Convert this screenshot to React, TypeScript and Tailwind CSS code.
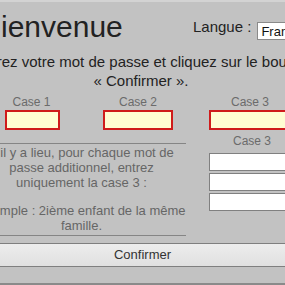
import { useState } from 'react';

export default function App() {
  const [lang, setLang] = useState('fr');

  return (
    <div className="h-[285px] w-[285px] overflow-hidden bg-[#c2c2c2] font-['Liberation_Sans',Arial,sans-serif] text-[#222]">
      {/* top strip */}
      <div className="h-[2px] bg-[#d3d3d3]" />

      {/* Header */}
      <div className="flex items-start pt-[8px]">
        <h1 className="-ml-[19px] w-[212px] shrink-0 text-[30px] font-normal leading-[34px]">Bienvenue</h1>
        <div className="mt-[8px] flex shrink-0 items-start">
          <span className="text-[15px] leading-[18px]">Langue :</span>
          <select
            value={lang}
            onChange={(e) => setLang(e.target.value)}
            className="ml-[6px] mt-[4px] h-[18px] w-[110px] appearance-none border border-[#8a8a8a] bg-white pl-[3px] text-[13px] leading-[15px] text-[#111]"
          >
            <option value="fr">Français</option>
            <option value="en">English</option>
          </select>
        </div>
      </div>

      {/* Instruction */}
      <p className="-ml-[59px] mt-[8px] w-[400px] text-center text-[15px] leading-[19px]">
        Entrez votre mot de passe et cliquez sur le bouton {'«\u00a0Confirmer\u00a0».'}
      </p>

      {/* Cases */}
      <div className="mt-[5px] flex items-start text-[12px] leading-[15px] text-[#6b6b6b]">
        <div className="flex w-[63px] shrink-0 flex-col items-center">
          <span>Case 1</span>
          <input className="ml-[1px] h-[20px] w-[55px] border-2 border-[#cf1b1b] bg-[#fffdd2] outline-none" />
        </div>
        <div className="ml-[40px] flex w-[70px] shrink-0 flex-col items-center">
          <span>Case 2</span>
          <input className="h-[20px] w-[70px] border-2 border-[#cf1b1b] bg-[#fffdd2] outline-none" />
        </div>
        <div className="ml-[36px] flex w-[82px] shrink-0 flex-col items-center">
          <span>Case 3</span>
          <input className="h-[20px] w-[82px] border-2 border-[#cf1b1b] bg-[#fffdd2] outline-none" />
        </div>
      </div>

      <div className="flex items-start leading-[15px] text-[#666]">
        <div className="-ml-[23px] mt-[13px] w-[209px] shrink-0 border-y border-[#858585] pb-[2px] pt-[1px] text-center text-[13px]">
          <p>S'il y a lieu, pour chaque mot de passe additionnel, entrez uniquement la case 3 :</p>
          <p className="mt-[13px]">Exemple : 2ième enfant de la même famille.</p>
        </div>
        <div className="ml-[23px] mt-[4px] flex w-[86px] shrink-0 flex-col items-center text-[12px] text-[#6b6b6b]">
          <span>Case 3</span>
          <div className="mt-[4px] flex w-full flex-col gap-[2px]">
            <input className="h-[18px] w-full border border-[#808080] bg-white outline-none" />
            <input className="h-[18px] w-full border border-[#808080] bg-white outline-none" />
            <input className="h-[18px] w-full border border-[#808080] bg-white outline-none" />
          </div>
        </div>
      </div>

      {/* Button */}
      <button
        type="button"
        className="mt-[7px] block w-full border-y border-[#7f7f7f] bg-gradient-to-b from-[#ededed] to-[#e0e0e0] pb-[4px] pt-[3px] text-center text-[13px] leading-[15px] text-[#333]"
      >
        Confirmer
      </button>

      <div className="mt-[16px] h-[4px] bg-[#8a8a8a]" />
    </div>
  );
}
